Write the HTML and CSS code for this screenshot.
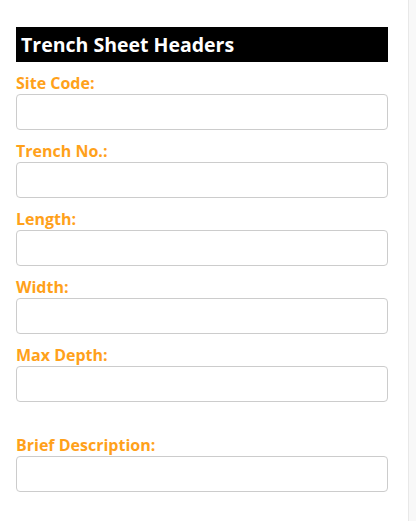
FILE: index.html
```html
<!DOCTYPE html>
<html>
<head>
<meta charset="utf-8">
<link rel="stylesheet" href="styles.css">
</head>
<body>
<div class="page">
  <main class="main">
    <h2 class="title">Trench Sheet Headers</h2>
    <div class="field"><label class="label">Site Code:</label><input class="input" type="text"></div>
    <div class="field"><label class="label">Trench No.:</label><input class="input" type="text"></div>
    <div class="field"><label class="label">Length:</label><input class="input" type="text"></div>
    <div class="field"><label class="label">Width:</label><input class="input" type="text"></div>
    <div class="field"><label class="label">Max Depth:</label><input class="input" type="text"></div>
    <div class="spacer"></div>
    <div class="field"><label class="label">Brief Description:</label><input class="input" type="text"></div>
  </main>
  <aside class="side"></aside>
</div>
</body>
</html>
```
FILE: styles.css
```css
html, body {
  margin: 0;
  padding: 0;
  height: 100%;
  background: #fff;
  font-family: "Open Sans", "Liberation Sans", sans-serif;
}
.page {
  display: flex;
  height: 521px;
}
.main {
  width: 372px;
  padding: 27px 20px 0 16px;
  display: flex;
  flex-direction: column;
  gap: 11px;
}
.side {
  flex: 1;
  border-left: 1px solid #e8e8e8;
  background: #f8f8f8;
}
.title {
  margin: 0;
  height: 35px;
  background: #000;
  color: #fff;
  font-size: 19.5px;
  font-weight: 700;
  line-height: 35px;
  padding-left: 5px;
}
.field {
  display: flex;
  flex-direction: column;
  gap: 1px;
}
.label {
  color: #ffa11a;
  font-size: 16px;
  font-weight: 700;
  line-height: 20px;
}
.input {
  box-sizing: border-box;
  width: 372px;
  height: 36px;
  margin: 0;
  border: 1px solid #cccccc;
  border-radius: 4px;
  background: #fff;
  outline: none;
  padding: 0 8px;
}
.spacer {
  height: 11px;
}
```
